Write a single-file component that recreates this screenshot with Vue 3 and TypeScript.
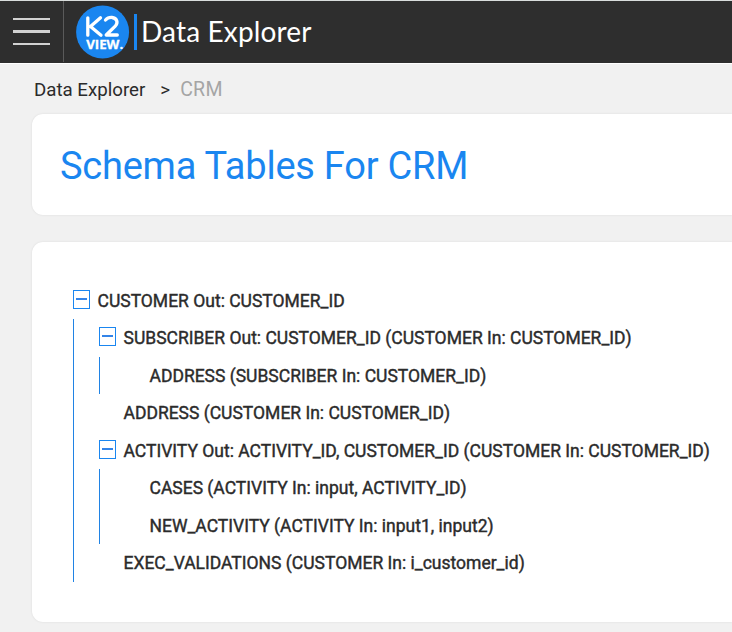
<script setup lang="ts">
import { defineComponent, h, type VNode } from 'vue'

interface TreeNode {
  label: string
  children?: TreeNode[]
}

const tree: TreeNode[] = [
  {
    label: 'CUSTOMER Out: CUSTOMER_ID',
    children: [
      {
        label: 'SUBSCRIBER Out: CUSTOMER_ID (CUSTOMER In: CUSTOMER_ID)',
        children: [{ label: 'ADDRESS (SUBSCRIBER In: CUSTOMER_ID)' }],
      },
      { label: 'ADDRESS (CUSTOMER In: CUSTOMER_ID)' },
      {
        label: 'ACTIVITY Out: ACTIVITY_ID, CUSTOMER_ID (CUSTOMER In: CUSTOMER_ID)',
        children: [
          { label: 'CASES (ACTIVITY In: input, ACTIVITY_ID)' },
          { label: 'NEW_ACTIVITY (ACTIVITY In: input1, input2)' },
        ],
      },
      { label: 'EXEC_VALIDATIONS (CUSTOMER In: i_customer_id)' },
    ],
  },
]

function renderNodes(nodes: TreeNode[]): VNode {
  return h(
    'ul',
    nodes.map((node) =>
      h('li', [
        h('div', { class: 'row' }, [
          h('span', { class: node.children ? 'toggle open' : 'toggle' }),
          h('span', { class: 'label' }, node.label),
        ]),
        node.children ? renderNodes(node.children) : null,
      ]),
    ),
  )
}

const SchemaTree = defineComponent({
  setup: () => () => h('div', { class: 'tree' }, [renderNodes(tree)]),
})
</script>

<template>
  <div class="page">
    <header class="topbar">
      <div class="menu">
        <svg width="37" height="27" viewBox="0 0 37 27" fill="#d2d2d2">
          <rect width="37" height="2" />
          <rect y="12" width="37" height="3" />
          <rect y="25" width="37" height="2" />
        </svg>
      </div>
      <svg class="logo" width="54" height="54" viewBox="0 0 54 54">
        <circle cx="26.600" cy="27" r="26.500" fill="#1a86f0" />
        <g fill="none" stroke="#fff" stroke-width="3.300" stroke-linecap="round" stroke-linejoin="round">
          <path d="M11.800 12.800V30.200M24.500 12.800L14.500 21.500L25 30.200" />
          <path d="M29.500 15C31.500 12.800 33.500 12.300 36 12.500C41 13 42.300 17.500 39.500 20.800L30.200 30H41.300" />
        </g>
        <text x="10.200" y="44" textLength="37" lengthAdjust="spacingAndGlyphs">VIEW.</text>
      </svg>
      <div class="brand-bar"></div>
      <div class="app-name">Data Explorer</div>
    </header>
    <nav class="crumbs">
      <span>Data Explorer</span>
      <span class="sep">&gt;</span>
      <span class="current">CRM</span>
    </nav>
    <main>
      <section class="card heading"><h1>Schema Tables For CRM</h1></section>
      <section class="card content"><SchemaTree /></section>
    </main>
  </div>
</template>

<style>
body {
  margin: 0;
  overflow: hidden;
}
.tree ul {
  list-style: none;
  margin: 0;
  padding: 0;
}
.tree ul ul {
  border-left: 1px solid #2083e4;
  padding-left: 25px;
}
.tree .row {
  display: flex;
  height: 37.5px;
  align-items: center;
  gap: 7.5px;
}
.tree .toggle {
  box-sizing: border-box;
  flex: none;
  width: 17px;
  height: 19px;
  margin-bottom: 2px;
}
.tree .toggle.open {
  display: flex;
  justify-content: center;
  border: 1px solid #1a86f0;
  padding-top: 7px;
}
.tree .toggle.open::before {
  content: '';
  width: 11px;
  height: 2px;
  background: #3384e8;
}
.tree .label {
  white-space: nowrap;
  font-size: 17.5px;
  font-weight: 400;
  line-height: 20px;
  padding-top: 1.2px;
  -webkit-text-stroke: 0.4px #2b2b2b;
}
</style>

<style scoped>
.page {
  box-sizing: border-box;
  height: 632px;
  overflow: hidden;
  background: #f1f1f1;
  border-top: 1px solid #d9dddc;
  color: #2b2b2b;
  font-family: Roboto, sans-serif;
}
.topbar {
  display: flex;
  box-sizing: border-box;
  height: 63px;
  background: #2e2e2e;
  border-bottom: 1px solid #fff;
}
.menu {
  box-sizing: border-box;
  width: 64px;
  height: 61px;
  padding: 17px 0 0 13px;
  border-right: 1px solid #5a5a5a;
}
.logo {
  margin: 4px 0 0 12px;
}
.logo text {
  font: 700 12px 'Open Sans', sans-serif;
  fill: #fff;
  stroke: #fff;
  stroke-width: 0.3px;
}
.brand-bar {
  width: 3px;
  height: 36px;
  margin: 13px 0 0 4px;
  background: #1a86f0;
}
.app-name {
  margin-left: 4px;
  color: #fff;
  font: 28px/60px Lato, sans-serif;
  letter-spacing: 0.15px;
  white-space: nowrap;
}
.crumbs {
  display: flex;
  height: 50px;
  padding-left: 34px;
  font-size: 18.7px;
  line-height: 52px;
}
.sep {
  margin: 0 10px 0 15px;
}
.current {
  color: #a5a5a5;
  font-size: 19.5px;
  letter-spacing: 0.3px;
}
main {
  display: grid;
  gap: 27px;
  padding-left: 32px;
}
.card {
  box-sizing: border-box;
  background: #fff;
  border-radius: 11px 0 0 11px;
  box-shadow: 0 0 2px #d8d8d8;
}
.heading {
  height: 101px;
  padding-left: 28px;
}
h1 {
  margin: 0;
  color: #1a86f0;
  font-size: 38px;
  font-weight: 400;
  letter-spacing: -0.24px;
  line-height: 104px;
}
.content {
  height: 380px;
  padding: 39.5px 0 0 41px;
}
</style>
